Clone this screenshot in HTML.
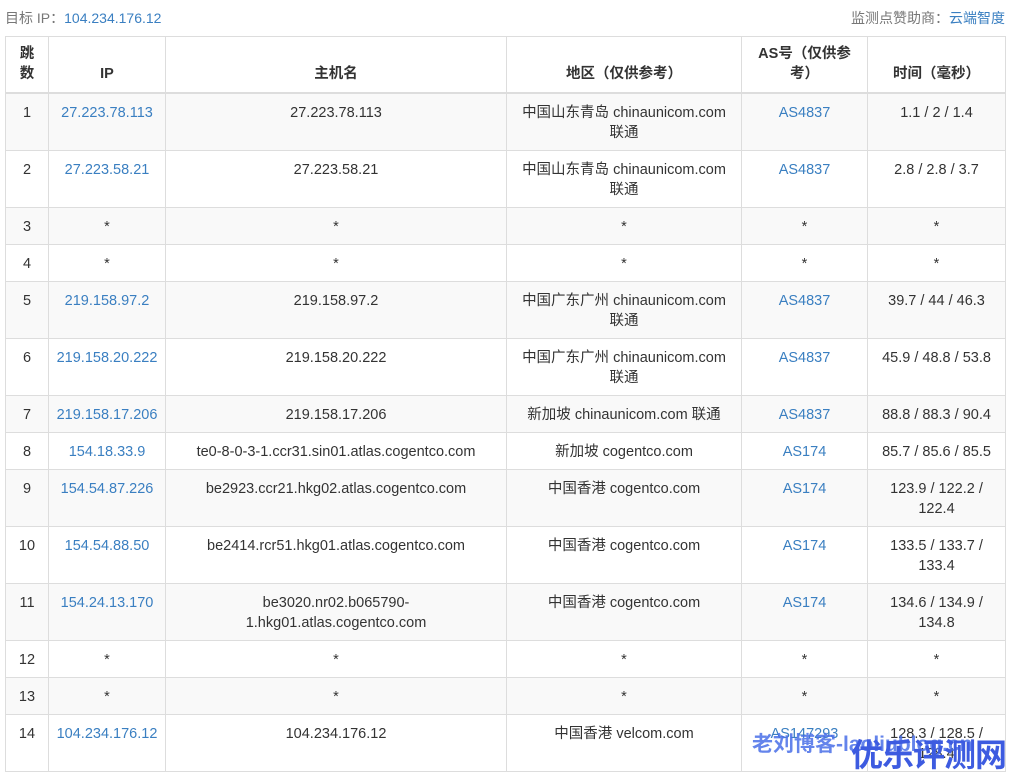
<!DOCTYPE html>
<html><head><meta charset="utf-8"><style>
body{margin:0;background:#fff;font-family:"Liberation Sans","Noto Sans CJK SC",sans-serif;font-size:14.5px;color:#333;width:1011px;height:779px;overflow:hidden;position:relative}
.top{position:absolute;top:8px;font-size:14px;color:#777}
a{color:#3a7fc1;text-decoration:none}
table{position:absolute;left:5px;top:36px;border-collapse:collapse;width:1000px;table-layout:fixed}
td,th{border:1px solid #ddd;text-align:center;vertical-align:top;padding:9px 2px 6px;line-height:20px;white-space:nowrap}
th{vertical-align:bottom;font-weight:bold;border-bottom:2px solid #ddd;padding:6px 2px 8px;color:#333;height:41px}
tbody tr:nth-child(odd){background:#f9f9f9}
.r2{height:41px}.r1{height:21px}
.wm1{position:absolute;left:752px;top:728px;font-size:21px;font-weight:bold;color:#4a6fe8;opacity:.85;white-space:nowrap}
.wm2{position:absolute;left:851px;top:730px;font-size:32px;font-weight:bold;color:#3d5be0;white-space:nowrap;letter-spacing:-1px}
</style></head><body>
<div class="top" style="left:5px">目标 IP：<a>104.234.176.12</a></div>
<div class="top" style="right:6px">监测点赞助商：<a>云端智度</a></div>
<table>
<colgroup><col style="width:43px"><col style="width:117px"><col style="width:341px"><col style="width:235px"><col style="width:126px"><col style="width:138px"></colgroup>
<thead><tr><th>跳<br>数</th><th>IP</th><th>主机名</th><th>地区（仅供参考）</th><th>AS号（仅供参<br>考）</th><th>时间（毫秒）</th></tr></thead>
<tbody>
<tr><td class="r2">1</td><td><a>27.223.78.113</a></td><td>27.223.78.113</td><td>中国山东青岛 chinaunicom.com<br>联通</td><td><a>AS4837</a></td><td>1.1 / 2 / 1.4</td></tr>
<tr><td class="r2">2</td><td><a>27.223.58.21</a></td><td>27.223.58.21</td><td>中国山东青岛 chinaunicom.com<br>联通</td><td><a>AS4837</a></td><td>2.8 / 2.8 / 3.7</td></tr>
<tr><td class="r1">3</td><td>*</td><td>*</td><td>*</td><td>*</td><td>*</td></tr>
<tr><td class="r1">4</td><td>*</td><td>*</td><td>*</td><td>*</td><td>*</td></tr>
<tr><td class="r2">5</td><td><a>219.158.97.2</a></td><td>219.158.97.2</td><td>中国广东广州 chinaunicom.com<br>联通</td><td><a>AS4837</a></td><td>39.7 / 44 / 46.3</td></tr>
<tr><td class="r2">6</td><td><a>219.158.20.222</a></td><td>219.158.20.222</td><td>中国广东广州 chinaunicom.com<br>联通</td><td><a>AS4837</a></td><td>45.9 / 48.8 / 53.8</td></tr>
<tr><td class="r1">7</td><td><a>219.158.17.206</a></td><td>219.158.17.206</td><td>新加坡 chinaunicom.com 联通</td><td><a>AS4837</a></td><td>88.8 / 88.3 / 90.4</td></tr>
<tr><td class="r1">8</td><td><a>154.18.33.9</a></td><td>te0-8-0-3-1.ccr31.sin01.atlas.cogentco.com</td><td>新加坡 cogentco.com</td><td><a>AS174</a></td><td>85.7 / 85.6 / 85.5</td></tr>
<tr><td class="r2">9</td><td><a>154.54.87.226</a></td><td>be2923.ccr21.hkg02.atlas.cogentco.com</td><td>中国香港 cogentco.com</td><td><a>AS174</a></td><td>123.9 / 122.2 /<br>122.4</td></tr>
<tr><td class="r2">10</td><td><a>154.54.88.50</a></td><td>be2414.rcr51.hkg01.atlas.cogentco.com</td><td>中国香港 cogentco.com</td><td><a>AS174</a></td><td>133.5 / 133.7 /<br>133.4</td></tr>
<tr><td class="r2">11</td><td><a>154.24.13.170</a></td><td>be3020.nr02.b065790-<br>1.hkg01.atlas.cogentco.com</td><td>中国香港 cogentco.com</td><td><a>AS174</a></td><td>134.6 / 134.9 /<br>134.8</td></tr>
<tr><td class="r1">12</td><td>*</td><td>*</td><td>*</td><td>*</td><td>*</td></tr>
<tr><td class="r1">13</td><td>*</td><td>*</td><td>*</td><td>*</td><td>*</td></tr>
<tr><td class="r2">14</td><td><a>104.234.176.12</a></td><td>104.234.176.12</td><td>中国香港 velcom.com</td><td><a>AS147293</a></td><td>128.3 / 128.5 /<br>128.4</td></tr>
</tbody></table>
<div class="wm1">老刘博客-laoliublog.cn</div>
<div class="wm2">优乐评测网</div>
</body></html>
